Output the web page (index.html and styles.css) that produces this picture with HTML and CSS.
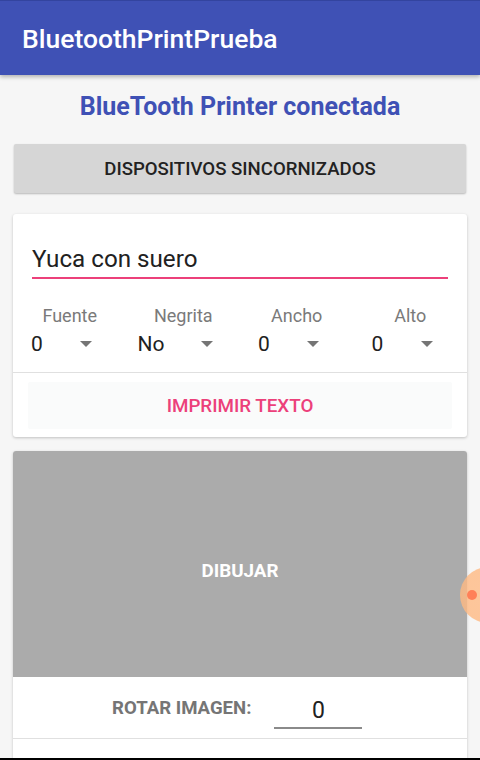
FILE: index.html
```html
<!DOCTYPE html>
<html lang="es">
<head>
<meta charset="utf-8">
<title>BluetoothPrintPrueba</title>
<link rel="stylesheet" href="styles.css">
</head>
<body>
<header class="appbar"><h1 class="appbar-title">BluetoothPrintPrueba</h1></header>
<main class="content">
  <h2 class="status">BlueTooth Printer conectada</h2>
  <button class="btn-devices">DISPOSITIVOS SINCORNIZADOS</button>
  <section class="card card-text">
    <div class="field">Yuca con suero</div>
    <div class="options">
      <div class="opt">
        <div class="opt-label">Fuente</div>
        <div class="spinner"><span class="spin-val">0</span><span class="caret"></span></div>
      </div>
      <div class="opt">
        <div class="opt-label">Negrita</div>
        <div class="spinner spinner-wide"><span class="spin-val">No</span><span class="caret"></span></div>
      </div>
      <div class="opt">
        <div class="opt-label">Ancho</div>
        <div class="spinner"><span class="spin-val">0</span><span class="caret"></span></div>
      </div>
      <div class="opt">
        <div class="opt-label">Alto</div>
        <div class="spinner"><span class="spin-val">0</span><span class="caret"></span></div>
      </div>
    </div>
    <div class="divider"></div>
    <button class="btn-print">IMPRIMIR TEXTO</button>
  </section>
  <section class="card card-draw">
    <div class="canvas">DIBUJAR</div>
    <div class="rotate-row">
      <span class="rotate-label">ROTAR IMAGEN:</span>
      <span class="rotate-input">0</span>
    </div>
    <div class="divider"></div>
    <div class="more"></div>
  </section>
</main>
<div class="navbar"></div>
<div class="touch"><span class="touch-ring"></span><span class="touch-dot"></span></div>
</body>
</html>
```
FILE: styles.css
```css
html, body {
  margin: 0;
  padding: 0;
}
body {
  width: 480px;
  height: 760px;
  overflow: hidden;
  background: #f6f6f6;
  font-family: Roboto, "Noto Sans", "Liberation Sans", sans-serif;
  display: flex;
  flex-direction: column;
  position: relative;
}
.appbar {
  height: 74px;
  flex: none;
  background: #3f51b5;
  border-top: 1px solid #33449f;
  box-shadow: 0 2px 4px rgba(0,0,0,0.28);
  position: relative;
  z-index: 2;
  display: flex;
  align-items: center;
}
.appbar-title {
  margin: 0;
  padding-left: 22px;
  color: #fff;
  font-size: 26.5px;
  font-weight: 500;
  line-height: 30px;
  margin-top: 2px;
}
.content {
  flex: 1;
  overflow: hidden;
  padding: 0 13px;
  display: flex;
  flex-direction: column;
}
.status {
  margin: 17px 0 0;
  text-align: center;
  color: #3f51b5;
  font-size: 25px;
  font-weight: 700;
  line-height: 30px;
}
.btn-devices {
  margin: 22px 1px 0;
  height: 49px;
  border: none;
  border-radius: 2px;
  background: #d6d6d6;
  box-shadow: 0 1px 2px rgba(0,0,0,0.25);
  font-family: inherit;
  font-size: 18.6px;
  font-weight: 500;
  color: #222;
  padding: 0;
}
.card {
  background: #fff;
  border-radius: 3px;
  box-shadow: 0 1px 3px rgba(0,0,0,0.22);
  flex: none;
  display: flex;
  flex-direction: column;
}
.card-text {
  margin-top: 21px;
}
.field {
  margin: 31px 19px 0;
  font-size: 24.2px;
  line-height: 28px;
  color: #212121;
  padding-bottom: 4px;
  border-bottom: 2px solid #ec407a;
}
.options {
  margin-top: 26px;
  display: grid;
  grid-template-columns: repeat(4, 1fr);
}
.opt-label {
  text-align: center;
  color: #7a7a7a;
  font-size: 18px;
  line-height: 22px;
}
.spinner {
  margin-top: 4px;
  height: 26px;
  display: flex;
  align-items: center;
  padding-left: 18px;
}
.spinner-wide {
  padding-left: 11px;
}
.spin-val {
  font-size: 21px;
  line-height: 26px;
  color: #212121;
  width: 49px;
}
.spinner-wide .spin-val {
  width: 63px;
}
.caret {
  width: 0;
  height: 0;
  border-left: 6px solid transparent;
  border-right: 6px solid transparent;
  border-top: 6px solid #757575;
}
.divider {
  height: 1px;
  background: #e0e0e0;
  flex: none;
}
.card-text .divider {
  margin-top: 15px;
}
.btn-print {
  margin: 9px 15px 8px;
  height: 47px;
  border: none;
  background: #fafbfb;
  border-radius: 2px;
  color: #ec407a;
  font-family: inherit;
  font-size: 18.8px;
  font-weight: 500;
  padding: 0;
}
.card-draw {
  margin-top: 14px;
  overflow: hidden;
  flex: 1;
  border-bottom-left-radius: 0;
  border-bottom-right-radius: 0;
}
.canvas {
  height: 226px;
  flex: none;
  background: #ababab;
  color: #fff;
  font-size: 18.8px;
  font-weight: 700;
  display: flex;
  align-items: center;
  justify-content: center;
  padding-top: 14px;
  box-sizing: border-box;
}
.rotate-row {
  height: 61px;
  flex: none;
  display: flex;
  align-items: center;
  padding-left: 99px;
  gap: 23px;
}
.rotate-label {
  color: #757575;
  font-size: 18.6px;
  font-weight: 700;
}
.rotate-input {
  width: 88px;
  text-align: center;
  font-size: 23px;
  line-height: 28px;
  color: #212121;
  border-bottom: 2px solid #8a8a8a;
  margin-top: 10px;
  padding-bottom: 2px;
}
.more {
  flex: 1;
}
.navbar {
  height: 2px;
  flex: none;
  background: #000;
}
.touch {
  position: absolute;
  left: 444px;
  top: 560px;
  width: 36px;
  height: 70px;
  overflow: hidden;
}
.touch-ring {
  position: absolute;
  left: 16px;
  top: 7px;
  width: 56px;
  height: 56px;
  border-radius: 50%;
  background: radial-gradient(circle, rgba(255,190,140,0.85) 0%, rgba(255,185,130,0.8) 70%, rgba(245,160,100,0.55) 90%, rgba(245,160,100,0.2) 100%);
}
.touch-dot {
  position: absolute;
  left: 23px;
  top: 30px;
  width: 10px;
  height: 10px;
  border-radius: 50%;
  background: #ff8058;
}
```
